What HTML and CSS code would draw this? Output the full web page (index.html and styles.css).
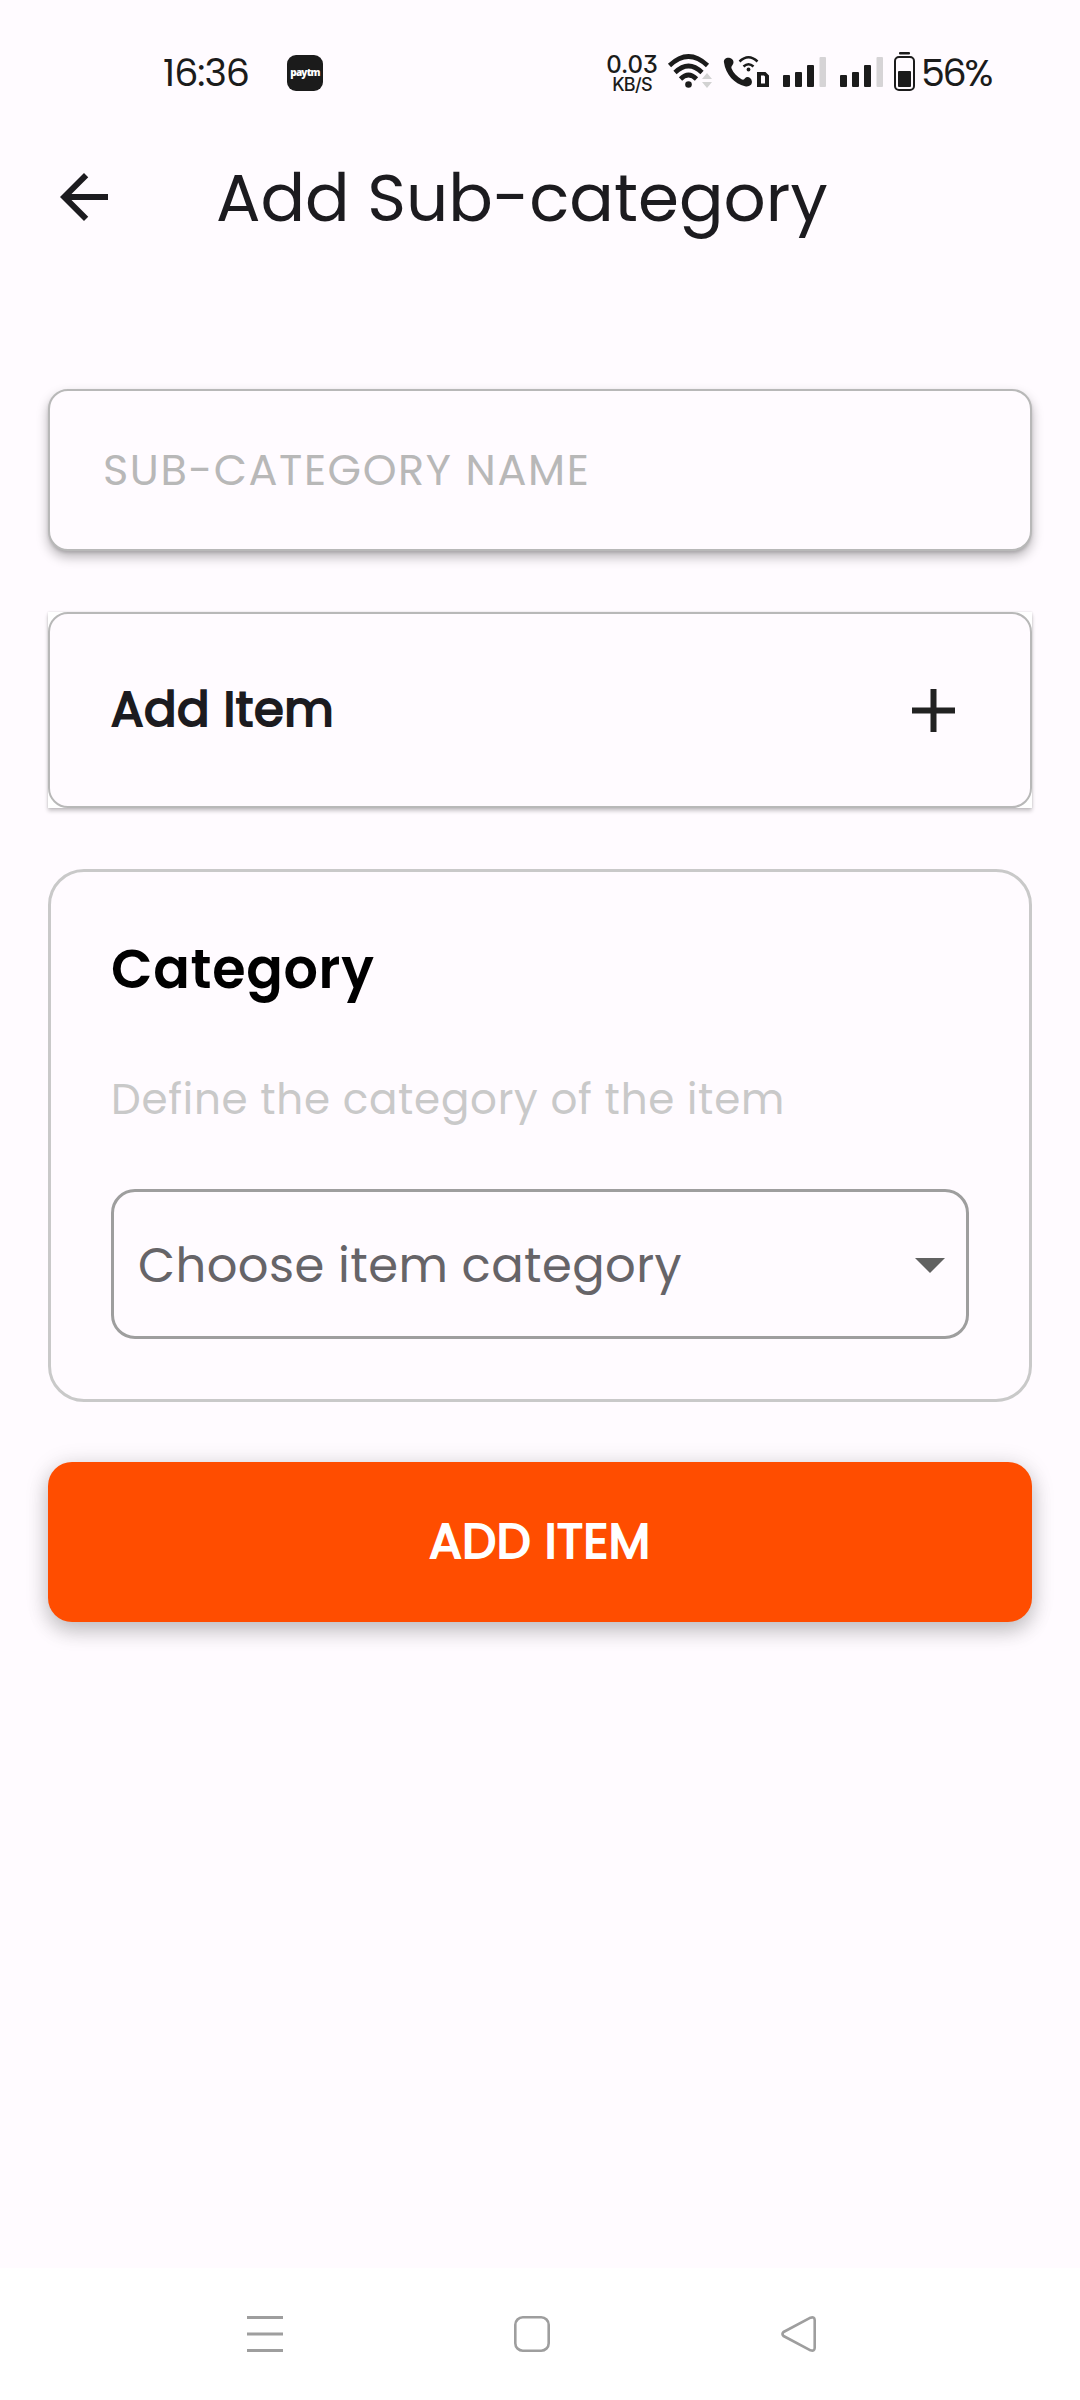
FILE: index.html
```html
<!DOCTYPE html>
<html lang="en">
<head>
<meta charset="utf-8">
<title>Add Sub-category</title>
<link rel="stylesheet" href="styles.css">
</head>
<body>
<div class="screen">
  <div class="status">
    <span class="clock">16:36</span>
    <span class="paytm">paytm</span>
    <span class="speed"><span class="rate">0.03</span><span class="unit">KB/S</span></span>
    <svg class="indicators" width="256" height="44" viewBox="662 50 256 44" fill="#1b1b1b">
      <g fill="none" stroke="#1b1b1b" stroke-width="4.6">
        <path d="M669.5 65.5Q688.500 47.500 707.500 65.500"/>
        <path d="M675 72.500Q688.500 59.500 702 72.500"/>
        <path d="M680.500 79Q688.500 71 696.500 79"/>
      </g>
      <circle cx="688.500" cy="84.500" r="3.300"/>
      <path fill="#d2d2d2" d="M702 79l5-6 5 6zM702 82h10l-5 6z"/>
      <path d="M724 62.500c-.8-3.500 3-5.500 6-4.500 3.500 1 4.500 4.500 2.500 7-1 1.300-1.500 2-.8 3.800 1.600 4 5.300 8 9.800 10.400 1.800.9 2.600.3 3.500-1 1.800-2.400 6.500-1.200 6.900 3.400.3 3.700-3 5.400-6.900 4.600-10.500-2-19.500-12.200-21-23.700z"/>
      <g fill="none" stroke="#1b1b1b" stroke-width="2.500">
        <path d="M739.500 61.500Q748.500 53 757.500 61.500"/>
        <path d="M743.500 66.500Q748.500 62 753.500 66.500"/>
      </g>
      <circle cx="748.500" cy="69.500" r="1.900"/>
      <path fill-rule="evenodd" d="M757 72h8.500l3.500 3.500V87h-12zM761 75.500v8h4v-7l-1-1z"/>
      <g id="signal">
        <rect x="783" y="75" width="7" height="12" rx="1"/>
        <rect x="795" y="72" width="7" height="15" rx="1"/>
        <rect x="807" y="65" width="7" height="22" rx="1"/>
        <rect x="819.500" y="57" width="6.500" height="30" rx="1" fill="#d6d4d6"/>
      </g>
      <use href="#signal" x="57"/>
      <rect x="899" y="52" width="11" height="2.500" rx="1"/>
      <rect x="895" y="57" width="19" height="33" rx="4" fill="none" stroke="#1b1b1b" stroke-width="2"/>
      <rect x="898" y="71" width="13" height="16" rx="1"/>
    </svg>
    <span class="battery">56%</span>
  </div>

  <header class="appbar">
    <svg class="back" width="72" height="72" viewBox="0 0 24 24" fill="#1c1b1f"><path d="M20 11H7.830l5.590-5.590L12 4l-8 8 8 8 1.410-1.410L7.830 13H20v-2z"/></svg>
    <h1 class="title">Add Sub-category</h1>
  </header>

  <main class="form">
    <div class="field"><span class="placeholder">SUB-CATEGORY NAME</span></div>

    <div class="item-wrap">
      <div class="item">
        <span class="item-label">Add Item</span>
        <svg width="43" height="43" viewBox="0 0 43 43" fill="#222"><path d="M18.500 0h6v18.500H43v6H24.500V43h-6V24.500H0v-6h18.500z"/></svg>
      </div>
    </div>

    <section class="category">
      <h2 class="category-title">Category</h2>
      <p class="category-hint">Define the category of the item</p>
      <div class="select">
        <span class="select-text">Choose item category</span>
        <svg class="caret" width="30" height="15" viewBox="0 0 30 15" fill="#616161"><path d="M0 0h30L15 15z"/></svg>
      </div>
    </section>

    <div class="submit"><span class="submit-text">ADD ITEM</span></div>
  </main>

  <nav class="navbar">
    <svg width="36" height="36" viewBox="0 0 36 36" stroke="#9e9e9e" stroke-width="3"><path d="M0 1.500h36M0 18h36M0 34.500h36"/></svg>
    <svg width="36" height="36" viewBox="0 0 36 36" fill="none" stroke="#9e9e9e" stroke-width="2.600"><rect x="1.300" y="1.300" width="33.400" height="33.400" rx="7.500"/></svg>
    <svg width="36" height="36" viewBox="0 0 36 36" fill="none" stroke="#9e9e9e" stroke-width="2.600" stroke-linejoin="round"><path d="M2.500 16Q.5 18 2.500 20L29.500 34.300Q33.500 35.600 33.700 32V4Q33.500.4 29.500 1.700Z"/></svg>
  </nav>
</div>
</body>
</html>
```
FILE: styles.css
```css
* { box-sizing: border-box; margin: 0; padding: 0; }

body {
  background: #fffbff;
  color: #1c1b1f;
  font-family: "Poppins", "Inter", sans-serif;
}

svg { display: block; flex: none; }

.screen {
  width: 1080px;
  height: 2400px;
  display: flex;
  flex-direction: column;
  white-space: nowrap;
}

/* Status bar */
.status {
  height: 144px;
  padding-left: 163px;
  display: flex;
  align-items: center;
  color: #1b1b1b;
}
.clock { width: 124px; font-size: 38px; letter-spacing: -1px; }
.paytm {
  width: 36px;
  height: 36px;
  margin-top: 2px;
  border-radius: 9px;
  background: #1b1b1b;
  color: #fff;
  font: 800 10px/34px "Open Sans", sans-serif;
  letter-spacing: -0.8px;
  text-align: center;
}
.speed {
  width: 50px;
  margin: 4px 0 0 284px;
  display: flex;
  flex-direction: column;
  align-items: center;
  font-family: "Inter", sans-serif;
  font-feature-settings: "cv09";
  font-weight: 500;
}
.rate { font-size: 24px; line-height: 20px; letter-spacing: -0.2px; }
.unit { font-size: 18px; line-height: 19px; letter-spacing: -0.7px; }
.indicators { margin-left: 5px; }
.battery { margin-left: 3px; font-size: 38px; letter-spacing: -2.3px; }

/* App bar */
.appbar {
  height: 108px;
  padding-left: 48px;
  display: flex;
  align-items: center;
  gap: 96px;
}
.back { margin-bottom: 2px; }
.title { font-size: 66px; font-weight: 400; }

/* Form */
.form {
  flex: 1;
  padding: 137px 48px 0;
}
.field {
  height: 162px;
  margin-bottom: 61px;
  padding-left: 53px;
  display: flex;
  align-items: center;
  border: 2px solid #b8b8b8;
  border-radius: 20px;
  background: #fffbff;
  box-shadow: 0 6px 12px rgba(0, 0, 0, .28), 0 2px 3px rgba(0, 0, 0, .12);
}
.placeholder { font-size: 43px; letter-spacing: 1.6px; color: #b8b8b8; }

.item-wrap {
  margin-bottom: 61px;
  background: #fff;
  box-shadow: 0 3px 4px rgba(0, 0, 0, .22), 0 0 2px rgba(0, 0, 0, .12);
}
.item {
  height: 196px;
  padding: 0 75px 0 61px;
  display: flex;
  align-items: center;
  justify-content: space-between;
  border: 2px solid #b8b8b8;
  border-radius: 20px;
  background: #fffbff;
}
.item-label { font-size: 48px; font-weight: 400; letter-spacing: .6px; -webkit-text-stroke: 2px currentColor; }

.category {
  height: 533px;
  margin-bottom: 60px;
  padding: 67px 60px 60px;
  border: 3px solid #c9c9c9;
  border-radius: 36px;
}
.category-title { font-size: 54px; font-weight: 600; line-height: 60px; letter-spacing: .7px; color: #000; }
.category-hint { margin: 76px 0 64px; font-size: 42px; line-height: 50px; letter-spacing: .75px; color: #c9c9c9; }
.select {
  height: 150px;
  padding: 0 21px 0 24px;
  display: flex;
  align-items: center;
  justify-content: space-between;
  border: 3px solid #9e9e9e;
  border-radius: 24px;
}
.select-text { padding-top: 3px; font-size: 48px; letter-spacing: .45px; color: #666468; }
.caret { margin-top: 2px; }

.submit {
  height: 160px;
  display: flex;
  align-items: center;
  justify-content: center;
  border-radius: 24px;
  background: #ff4d00;
  color: #fff;
  box-shadow: 0 10px 20px rgba(0, 0, 0, .17), 0 3px 24px rgba(0, 0, 0, .14);
}
.submit-text { font-size: 48px; font-weight: 400; letter-spacing: .6px; -webkit-text-stroke: 2px currentColor; }

/* System navigation */
.navbar {
  height: 132px;
  padding: 48px 263px 0 247px;
  display: flex;
  justify-content: space-between;
  background: #fff;
}
```
